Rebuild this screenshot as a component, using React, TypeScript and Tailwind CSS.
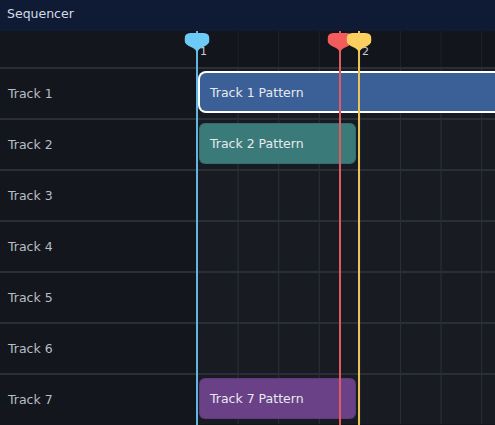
import React from 'react'

const BEAT = 40.6

const tracks = [
  { name: 'Track 1', pattern: { label: 'Track 1 Pattern', start: 0, len: 8, color: 'bg-[#3b5f97]', selected: true } },
  { name: 'Track 2', pattern: { label: 'Track 2 Pattern', start: 0, len: 4, color: 'bg-[#3a7a78]', selected: false } },
  { name: 'Track 3' },
  { name: 'Track 4' },
  { name: 'Track 5' },
  { name: 'Track 6' },
  { name: 'Track 7', pattern: { label: 'Track 7 Pattern', start: 0, len: 4, color: 'bg-[#6a4086]', selected: false } },
] as { name: string; pattern?: { label: string; start: number; len: number; color: string; selected: boolean } }[]

const markers = [
  { pos: 0, head: '#6dcaf7', line: '#63b6e2', label: '1' },
  { pos: 3.52, head: '#f25c5c', line: '#e05a5e', label: '' },
  { pos: 3.99, head: '#fbd05f', line: '#e9c45a', label: '2' },
]

function MarkerHead({ color }: { color: string }) {
  return (
    <svg width="25" height="20" viewBox="0 0 25 20">
      <path
        d="M6 0 H19 Q25 0 25 6 V7.5 Q25 11.5 17.5 14.5 Q13.5 16 12.5 20 Q11.5 16 7.5 14.5 Q0 11.5 0 7.5 V6 Q0 0 6 0 Z"
        fill={color}
      />
    </svg>
  )
}

export default function App() {
  return (
    <div
      className="w-[495px] h-[425px] overflow-hidden bg-[#13161c] text-[12.5px] flex flex-col"
      style={{ fontFamily: '"DejaVu Sans", Verdana, sans-serif' }}
    >
      <div className="h-[31px] shrink-0 bg-[#0f1b34] flex items-center px-[7px] pb-[2px] text-[#d5dbe6]">
        Sequencer
      </div>
      <div className="flex flex-1">
        <div className="w-[197px] shrink-0 flex flex-col">
          <div className="h-[36px]" />
          {tracks.map((t) => (
            <div
              key={t.name}
              className="h-[51px] border-t-2 border-[#2a2e36] flex items-center pl-2 pt-px text-[#b9bdc5]"
            >
              {t.name}
            </div>
          ))}
        </div>
        <div className="relative flex-1 flex flex-col">
          <div className="h-[36px] bg-[#12151b] bg-[linear-gradient(to_right,#1d2128_1px,transparent_1px)] bg-[size:40.6px_100%]" />
          {tracks.map((t) => (
            <div
              key={t.name}
              className="relative h-[51px] border-t-2 border-[#2a2e36] bg-[#181b22] bg-[linear-gradient(to_right,#2b3038_1px,transparent_1px)] bg-[size:40.6px_100%]"
            >
              {t.pattern && (
                <div
                  className={`absolute rounded-[6px] flex items-center pl-[10px] pt-[2px] text-[#e6eaef] whitespace-nowrap ${t.pattern.color} ${
                    t.pattern.selected
                      ? 'ring-2 ring-white'
                      : 'border border-black/10'
                  }`}
                  style={{
                    left: t.pattern.selected ? 3 : 2,
                    top: t.pattern.selected ? 4 : 3,
                    height: t.pattern.selected ? 38 : 41,
                    width: t.pattern.len * BEAT - 5,
                  }}
                >
                  {t.pattern.label}
                </div>
              )}
            </div>
          ))}
          {markers.map((m, i) => (
            <div
              key={i}
              className="absolute top-0 bottom-0 w-0"
              style={{ left: m.pos * BEAT }}
            >
              <div
                className="absolute top-0 bottom-0 w-[2px] -translate-x-1/2"
                style={{ background: m.line }}
              />
              <div className="absolute top-[2px] -translate-x-1/2 left-0 leading-none">
                <MarkerHead color={m.head} />
              </div>
              {m.label && (
                <div className="absolute top-[13px] left-[3px] text-[11px] text-[#c9cdd4]">
                  {m.label}
                </div>
              )}
            </div>
          ))}
        </div>
      </div>
    </div>
  )
}
